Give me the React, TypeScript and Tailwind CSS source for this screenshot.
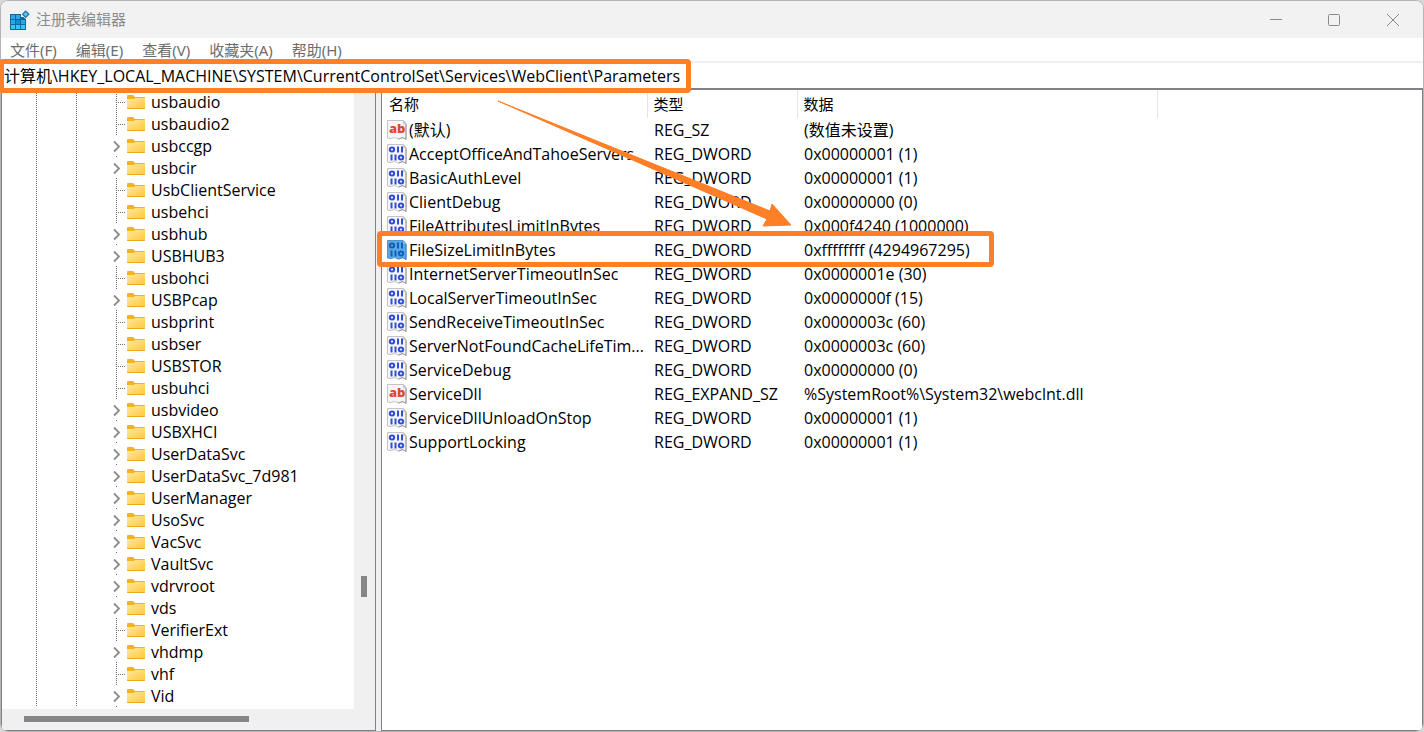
import { useState } from 'react';

type TreeNode = { name: string; expandable: boolean };

type RegValue = { name: string; kind: 'text' | 'binary'; type: string; data: string };

const MENUS = ['文件(F)', '编辑(E)', '查看(V)', '收藏夹(A)', '帮助(H)'];

const KEYS: TreeNode[] = [
  { name: 'usbaudio', expandable: false },
  { name: 'usbaudio2', expandable: false },
  { name: 'usbccgp', expandable: true },
  { name: 'usbcir', expandable: true },
  { name: 'UsbClientService', expandable: false },
  { name: 'usbehci', expandable: false },
  { name: 'usbhub', expandable: true },
  { name: 'USBHUB3', expandable: true },
  { name: 'usbohci', expandable: false },
  { name: 'USBPcap', expandable: true },
  { name: 'usbprint', expandable: false },
  { name: 'usbser', expandable: false },
  { name: 'USBSTOR', expandable: false },
  { name: 'usbuhci', expandable: false },
  { name: 'usbvideo', expandable: true },
  { name: 'USBXHCI', expandable: true },
  { name: 'UserDataSvc', expandable: true },
  { name: 'UserDataSvc_7d981', expandable: true },
  { name: 'UserManager', expandable: true },
  { name: 'UsoSvc', expandable: true },
  { name: 'VacSvc', expandable: true },
  { name: 'VaultSvc', expandable: true },
  { name: 'vdrvroot', expandable: true },
  { name: 'vds', expandable: true },
  { name: 'VerifierExt', expandable: false },
  { name: 'vhdmp', expandable: true },
  { name: 'vhf', expandable: false },
  { name: 'Vid', expandable: true },
];

const VALUES: RegValue[] = [
  { name: '(默认)', kind: 'text', type: 'REG_SZ', data: '(数值未设置)' },
  { name: 'AcceptOfficeAndTahoeServers', kind: 'binary', type: 'REG_DWORD', data: '0x00000001 (1)' },
  { name: 'BasicAuthLevel', kind: 'binary', type: 'REG_DWORD', data: '0x00000001 (1)' },
  { name: 'ClientDebug', kind: 'binary', type: 'REG_DWORD', data: '0x00000000 (0)' },
  { name: 'FileAttributesLimitInBytes', kind: 'binary', type: 'REG_DWORD', data: '0x000f4240 (1000000)' },
  { name: 'FileSizeLimitInBytes', kind: 'binary', type: 'REG_DWORD', data: '0xffffffff (4294967295)' },
  { name: 'InternetServerTimeoutInSec', kind: 'binary', type: 'REG_DWORD', data: '0x0000001e (30)' },
  { name: 'LocalServerTimeoutInSec', kind: 'binary', type: 'REG_DWORD', data: '0x0000000f (15)' },
  { name: 'SendReceiveTimeoutInSec', kind: 'binary', type: 'REG_DWORD', data: '0x0000003c (60)' },
  { name: 'ServerNotFoundCacheLifeTim...', kind: 'binary', type: 'REG_DWORD', data: '0x0000003c (60)' },
  { name: 'ServiceDebug', kind: 'binary', type: 'REG_DWORD', data: '0x00000000 (0)' },
  { name: 'ServiceDll', kind: 'text', type: 'REG_EXPAND_SZ', data: '%SystemRoot%\\System32\\webclnt.dll' },
  { name: 'ServiceDllUnloadOnStop', kind: 'binary', type: 'REG_DWORD', data: '0x00000001 (1)' },
  { name: 'SupportLocking', kind: 'binary', type: 'REG_DWORD', data: '0x00000001 (1)' },
];

function AppIcon() {
  const cells = [0, 1, 2].flatMap((row) => [0, 1, 2].map((col) => ({ row, col })));
  return (
    <svg width="20" height="20" viewBox="0 0 20 20">
      <path d="M0 4h11v3h5v13H0z" fill="#0e6a9e" />
      {cells
        .filter(({ row, col }) => !(row === 0 && col === 2))
        .map(({ row, col }) => (
          <rect
            key={`${row}-${col}`}
            x={1 + col * 5}
            y={5 + row * 5}
            width="4"
            height="4"
            fill={row === 1 && col === 1 ? '#128fd0' : row === 2 ? '#3cc4f2' : '#27a9e3'}
          />
        ))}
      <path d="M15.500 0l4.500 4.500-4.500 4.500L11 4.500z" fill="#f2f2f2" />
      <path d="M15.700 .3l4 4-4 4-4-4z" fill="#1a78ad" />
      <path d="M15.700 2l2.300 2.300-2.300 2.300-2.300-2.300z" fill="#5cc3ee" />
    </svg>
  );
}

function FolderIcon() {
  return (
    <svg width="18" height="14" viewBox="0 0 18 14" className="shrink-0">
      <defs>
        <linearGradient id="folder" x1="0" y1="0" x2="1" y2="1">
          <stop offset="0" stopColor="#ffe8a0" />
          <stop offset="1" stopColor="#ffc937" />
        </linearGradient>
      </defs>
      <path d="M0 1q0-1 1-1h5l2 2h9q1 0 1 1v3H0z" fill="#f5b21b" />
      <path d="M0 4h7l1-1h10v10q0 1-1 1H1q-1 0-1-1z" fill="url(#folder)" />
      <path d="M0 13h18q0 1-1 1H1q-1 0-1-1z" fill="#e8a921" />
    </svg>
  );
}

function TreeLines({ expandable }: { expandable: boolean }) {
  return (
    <svg width="125" height="22" viewBox="0 0 125 22" className="shrink-0" fill="none">
      <path d="M34.500 0v22M74.500 0v22" stroke="#6b6b6b" strokeDasharray="1 1" />
      {expandable ? (
        <>
          <path d="M114.500 21v1" stroke="#6b6b6b" />
          <path d="M112 6.500l5 5-5 5" stroke="#8c8c8c" strokeWidth="1.800" />
        </>
      ) : (
        <path d="M114.500 1v21M116 11.500h7" stroke="#6b6b6b" strokeDasharray="1 1" />
      )}
    </svg>
  );
}

function ValueIcon({ kind, selected }: { kind: RegValue['kind']; selected: boolean }) {
  const ink = selected ? '#0f5fc0' : '#2f4fd8';
  return (
    <svg width="20" height="20" viewBox="0 0 20 20" className="shrink-0" fill="none">
      <path
        d="M.5 .5h15.500l3 3.500v15.500l-3-2-4.500 1.500-4-1.500-3.500 1-3.500-.5z"
        fill={selected ? '#5aa9e6' : '#f6f6f6'}
        stroke={selected ? '#4b96d2' : '#c4c4c4'}
      />
      <path d="M16 .5l3 3.500v15.500l-3-2-4.500 1.500" stroke={selected ? '#3f87c4' : '#999'} />
      <path d="M16 1v3h3" fill={selected ? '#7dbdf0' : '#d0d0d0'} />
      {kind === 'text' ? (
        <text x="2" y="13" fontSize="13" fill="#dd4b2c" className="font-['Open_Sans',sans-serif] font-extrabold">
          ab
        </text>
      ) : (
        <g stroke={ink} strokeWidth="2">
          <ellipse cx="5" cy="5.500" rx="2.200" ry="1.900" />
          <path d="M11 2.500v6M15 2.500v6M4.500 10.500v6M8.500 10.500v6" />
          <ellipse cx="14" cy="13.500" rx="2.200" ry="1.900" />
        </g>
      )}
    </svg>
  );
}

export default function App() {
  const [path, setPath] = useState('计算机\\HKEY_LOCAL_MACHINE\\SYSTEM\\CurrentControlSet\\Services\\WebClient\\Parameters');
  const [selected, setSelected] = useState('FileSizeLimitInBytes');

  return (
    <div className="relative flex h-screen flex-col overflow-hidden bg-[#d8d8d8] font-['Open_Sans','Noto_Sans_CJK_SC',sans-serif] text-base text-black">
      <div className="flex min-h-0 flex-1 flex-col overflow-hidden rounded-lg border border-[#b4b4b6] bg-white">
        <header className="flex h-[37px] shrink-0 items-center bg-[#f2f2f2] pl-[9px] text-[15px] text-[#8b8b8b]">
          <AppIcon />
          <h1 className="ml-[6px] flex-1">注册表编辑器</h1>
          <button aria-label="最小化" className="flex h-full w-[58px] items-center justify-center">
            <svg width="12" height="12" stroke="currentColor"><path d="M0 5.500h12" /></svg>
          </button>
          <button aria-label="最大化" className="flex h-full w-[58px] items-center justify-center">
            <svg width="12" height="12" fill="none" stroke="currentColor"><rect x=".5" y=".5" width="11" height="11" rx="1" /></svg>
          </button>
          <button aria-label="关闭" className="flex h-full w-[60px] items-center justify-center">
            <svg width="12" height="12" stroke="currentColor"><path d="M0 0l12 12M12 0L0 12" /></svg>
          </button>
        </header>

        <nav className="flex h-[23px] shrink-0 items-center gap-[19px] pl-[9px] font-['Noto_Sans','Noto_Sans_CJK_SC',sans-serif] text-[15px] text-[#6d6d6d]">
          {MENUS.map((menu) => (
            <button key={menu} className="leading-5">{menu}</button>
          ))}
        </nav>

        <div className="flex h-[27px] shrink-0 border-t-2 border-[#efefef]">
          <input
            aria-label="地址"
            className="w-full pl-[3px] outline-none"
            value={path}
            onChange={(e) => setPath(e.target.value)}
          />
        </div>

        <main className="flex min-h-0 flex-1 gap-[5px] bg-[#f0f0f0]">
          <section className="flex w-[375px] shrink-0 flex-col border border-t-2 border-[#828087] bg-[#f0f0f0]">
            <div className="flex min-h-0 flex-1">
              <ul className="flex-1 overflow-hidden bg-white pt-px">
                {KEYS.map((key) => (
                  <li key={key.name} className="flex h-[22px] items-center">
                    <TreeLines expandable={key.expandable} />
                    <FolderIcon />
                    <span className="ml-[6px] leading-[22px]">{key.name}</span>
                  </li>
                ))}
              </ul>
              <div className="flex w-[21px] flex-col items-start pt-[486px] pl-[7px]">
                <div className="h-[21px] w-[6px] bg-[#868686]" />
              </div>
            </div>
            <div className="flex h-[21px] shrink-0 items-start pt-[7px] pl-[22px]">
              <div className="h-[6px] w-[225px] bg-[#868686]" />
            </div>
          </section>

          <section className="min-w-0 flex-1 border border-t-2 border-[#828087] bg-white">
            <table className="table-fixed border-collapse text-left">
              <thead>
                <tr className="h-[28px] text-[15px]">
                  <th className="w-[265px] border-r border-[#e5e5e5] p-0 pl-[7px] font-normal">名称</th>
                  <th className="w-[150px] border-r border-[#e5e5e5] p-0 pl-[6px] font-normal">类型</th>
                  <th className="w-[360px] border-r border-[#e5e5e5] p-0 pl-[6px] font-normal">数据</th>
                </tr>
              </thead>
              <tbody>
                {VALUES.map((value) => (
                  <tr key={value.name} className="h-6" onClick={() => setSelected(value.name)}>
                    <td className="p-0 pl-[5px]">
                      <div className="flex h-6 items-center gap-[2px] whitespace-nowrap">
                        <ValueIcon kind={value.kind} selected={value.name === selected} />
                        <span className="leading-6">{value.name}</span>
                      </div>
                    </td>
                    <td className="p-0 pl-[7px] leading-6">{value.type}</td>
                    <td className="p-0 pl-[7px] leading-6">{value.data}</td>
                  </tr>
                ))}
              </tbody>
            </table>
          </section>
        </main>
      </div>

      {/* annotations over the window */}
      <div className="pointer-events-none absolute top-[59px] left-[-1px] h-[34px] w-[692px] rounded-sm border-5 border-[#ff7f27]" />
      <div className="pointer-events-none absolute top-[231px] left-[377px] h-[36px] w-[617px] rounded-sm border-5 border-[#ff7f27]" />
      <svg className="pointer-events-none absolute top-[100px] left-[497px]" width="296" height="128" viewBox="497 100 296 128">
        <path d="M498 101l272 110 2-7 19 21-28 1 4-7z" fill="#ff7f27" stroke="#ff7f27" strokeLinejoin="round" />
      </svg>
    </div>
  );
}
